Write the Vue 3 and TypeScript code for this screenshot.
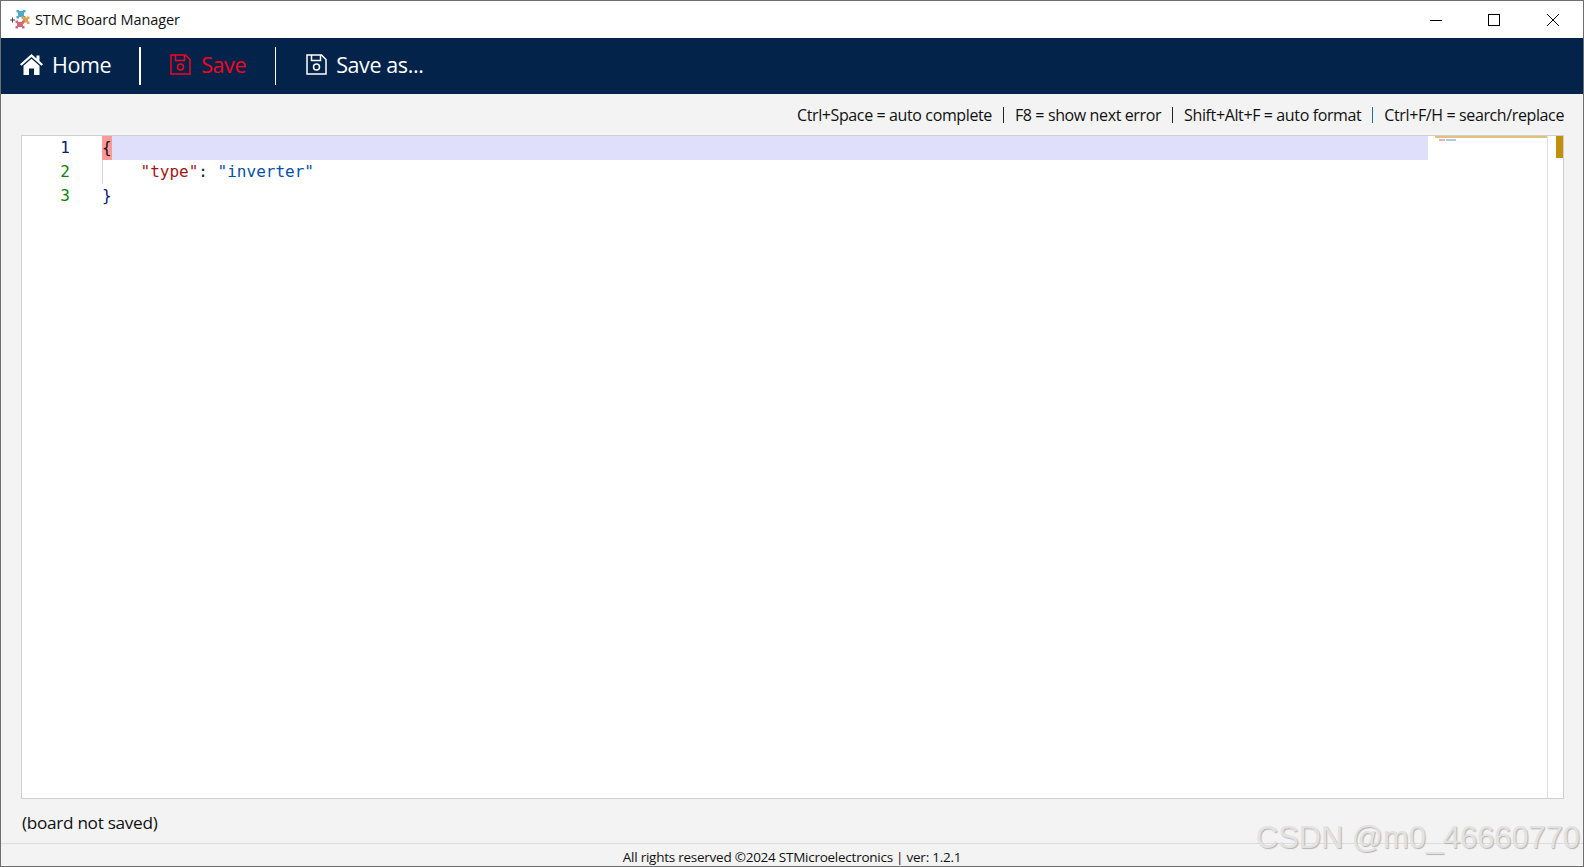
<script setup lang="ts">
const hints = [
  { text: 'Ctrl+Space = auto complete', sep: '#222' },
  { text: 'F8 = show next error', sep: '#222' },
  { text: 'Shift+Alt+F = auto format', sep: '#1a6fb0' },
  { text: 'Ctrl+F/H = search/replace', sep: '' },
]
</script>

<template>
  <div class="window">
    <header class="titlebar">
      <svg class="logo" viewBox="0 0 20 20" width="20" height="20">
        <path d="M0 10h5M2.500 7.500v5" stroke="#444" stroke-width="1" fill="none" />
        <g fill="#4eaacb"><rect x="8" y="1" width="6" height="6" /><rect x="6.500" y="0" width="2.500" height="2.500" /><rect x="13" y="0" width="2.500" height="2.500" /><rect x="6.500" y="6" width="2.500" height="2.500" /><rect x="13" y="6" width="2.500" height="2.500" /></g>
        <g fill="#e59f4c"><rect x="13" y="7.500" width="5" height="5" /><rect x="11.500" y="6.500" width="2.500" height="2.500" /><rect x="17" y="6.500" width="2.500" height="2.500" /><rect x="11.500" y="11.500" width="2.500" height="2.500" /><rect x="17" y="11.500" width="2.500" height="2.500" /></g>
        <g fill="#d2667a"><rect x="7" y="12" width="6" height="5" /><rect x="5.500" y="10.500" width="2.500" height="2.500" /><rect x="12" y="10.500" width="2.500" height="2.500" /><rect x="5.500" y="16" width="2.500" height="2.500" /><rect x="12" y="16" width="2.500" height="2.500" /></g>
      </svg>
      <span class="title">STMC Board Manager</span>
      <div class="controls">
        <span class="ctl"><svg width="12" height="12" viewBox="0 0 12 12"><path d="M0 6.500h12" stroke="#000" fill="none" /></svg></span>
        <span class="ctl"><svg width="12" height="12" viewBox="0 0 12 12"><rect x=".5" y=".5" width="11" height="11" stroke="#000" fill="none" /></svg></span>
        <span class="ctl"><svg width="12" height="12" viewBox="0 0 12 12"><path d="M0 0l12 12M12 0L0 12" stroke="#000" fill="none" /></svg></span>
      </div>
    </header>

    <nav class="navbar">
      <button class="nav-btn home">
        <svg width="23" height="21" viewBox="0 0 23 21"><path d="M11.500 0 L16.500 4.400 V1.500 H19.500 V7 L23 10.200 L21.500 11.800 L11.500 3 L1.500 11.800 L0 10.200 Z M3.500 11.800 L11.500 4.800 L19.500 11.800 V21 H14 V14.500 H9 V21 H3.500 Z" fill="#fff" /></svg>
        <span>Home</span>
      </button>
      <i class="divider thick"></i>
      <button class="nav-btn save">
        <svg width="21" height="21" viewBox="0 0 21 21" fill="none" stroke="currentColor" stroke-width="1.500"><path d="M1 1H15.500L20 5.500V20H1Z" /><path d="M5.500 1V6.500H14.500V1" /><circle cx="10.500" cy="13" r="3" /></svg>
        <span>Save</span>
      </button>
      <i class="divider"></i>
      <button class="nav-btn saveas">
        <svg width="21" height="21" viewBox="0 0 21 21" fill="none" stroke="currentColor" stroke-width="1.500"><path d="M1 1H15.500L20 5.500V20H1Z" /><path d="M5.500 1V6.500H14.500V1" /><circle cx="10.500" cy="13" r="3" /></svg>
        <span>Save as...</span>
      </button>
    </nav>

    <main class="content">
      <div class="hints">
        <template v-for="h in hints" :key="h.text">
          <span>{{ h.text }}</span>
          <i v-if="h.sep" class="sep" :style="{ background: h.sep }"></i>
        </template>
      </div>

      <section class="editor">
        <div class="gutter">
          <div class="ln active">1</div>
          <div class="ln">2</div>
          <div class="ln">3</div>
        </div>
        <div class="code">
          <div class="line current"><span class="bracket-match">{</span></div>
          <div class="line guide"><span class="key">"type"</span><span>: </span><span class="str">"inverter"</span></div>
          <div class="line"><span class="brace">}</span></div>
        </div>
        <aside class="minimap">
          <div class="mini-top"></div>
          <div class="mini-text"><i class="r"></i><i class="b"></i></div>
        </aside>
        <div class="overview"><div class="marker"></div></div>
      </section>

      <div class="status">(board not saved)</div>
    </main>

    <footer class="footer">All rights reserved ©2024 STMicroelectronics | ver: 1.2.1</footer>
    <div class="watermark">CSDN @m0_46660770</div>
  </div>
</template>

<style>
html, body { margin: 0; background: #fff; }
</style>

<style scoped>
.window {
  position: relative;
  height: 867px;
  box-sizing: border-box;
  border: 1px solid #6e6e6e;
  display: flex;
  flex-direction: column;
  overflow: hidden;
  background: #f3f3f3;
  font-family: "Open Sans", "Noto Sans", sans-serif;
  color: #111;
}
.titlebar {
  height: 37px;
  flex: none;
  background: #fff;
  display: flex;
  align-items: center;
  padding-left: 9px;
}
.logo { margin-right: 5px; flex: none; }
.title { font-size: 14.500px; letter-spacing: -0.1px; }
.controls { margin-left: auto; display: flex; margin-right: 1px; }
.ctl { width: 58.500px; display: flex; justify-content: center; align-items: center; height: 37px; }
.navbar {
  height: 56px;
  flex: none;
  background: #03234b;
  display: flex;
  align-items: center;
  padding: 0 0 3px 19px;
  box-sizing: border-box;
}
.nav-btn {
  background: none;
  border: 0;
  padding: 0;
  display: flex;
  align-items: center;
  gap: 9px;
  font: inherit;
  font-size: 21.500px;
  letter-spacing: -0.4px;
  color: #fff;
}
.nav-btn.save { color: #f5051e; margin: 0 29px 0 29px; gap: 10px; }
.nav-btn.saveas { margin-left: 30px; gap: 9px; }
.divider { width: 1px; height: 38px; background: #fff; margin-top: 3px; }
.divider.thick { width: 2px; margin-left: 28px; }
.content {
  flex: 1;
  min-height: 0;
  display: flex;
  flex-direction: column;
  padding: 0 19px 0 20px;
}
.hints {
  height: 41px;
  flex: none;
  display: flex;
  align-items: center;
  justify-content: flex-end;
  font-size: 16px;
  letter-spacing: -0.38px;
  color: #111;
}
.sep { width: 1px; height: 16px; margin: 0 11px; }
.editor {
  flex: none;
  height: 664px;
  box-sizing: border-box;
  border: 1px solid #cfcfcf;
  background: #fff;
  position: relative;
  display: flex;
  font-family: "DejaVu Sans Mono", "Liberation Mono", monospace;
  font-size: 16px;
  line-height: 24px;
}
.gutter { width: 80px; flex: none; }
.ln { width: 48px; text-align: right; color: #098300; }
.ln.active { color: #0b216f; }
.code { flex: 1; white-space: pre; }
.line { height: 24px; width: 1326px; color: #222; }
.line.current { background: #dfdffb; }
.bracket-match { background: #f99; display: inline-block; color: #111; }
.guide { box-shadow: inset 1px 0 0 #d6d6d6; padding-left: 4ch; box-sizing: border-box; }
.key { color: #a31515; }
.str { color: #0451a5; }
.brace { color: #0b216f; }
.minimap {
  position: absolute;
  top: 0;
  left: 1413px;
  width: 112px;
  height: 100%;
}
.mini-top { height: 2px; background: #e0c27a; }
.mini-text { display: flex; gap: 1px; margin: 1px 0 0 4px; }
.mini-text i { display: block; height: 2px; }
.mini-text .r { width: 6px; background: #e8b0b0; }
.mini-text .b { width: 10px; background: #b8c6e6; }
.overview {
  position: absolute;
  top: 0;
  right: 0;
  width: 16px;
  height: 100%;
  box-sizing: border-box;
  border-left: 1px solid #e0e0e0;
  display: flex;
  justify-content: flex-end;
}
.marker { width: 7px; height: 22px; background: #c28f0b; }
.status {
  height: 44px;
  flex: none;
  display: flex;
  align-items: center;
  font-size: 17.200px;
  letter-spacing: -0.3px;
  padding: 2px 0 0 1px;
  box-sizing: border-box;
}
.footer {
  flex: none;
  height: 23px;
  box-sizing: border-box;
  border-top: 1px solid #dcdcdc;
  text-align: center;
  font-size: 13.500px;
  letter-spacing: -0.25px;
  line-height: 27px;
}
.watermark {
  position: absolute;
  right: 3px;
  bottom: 13px;
  font-family: "Liberation Sans", sans-serif;
  font-size: 30.800px;
  line-height: 30px;
  color: #e2e2e2;
  text-shadow: 1px 1px 1px #b4b4b4;
  white-space: nowrap;
}
</style>
